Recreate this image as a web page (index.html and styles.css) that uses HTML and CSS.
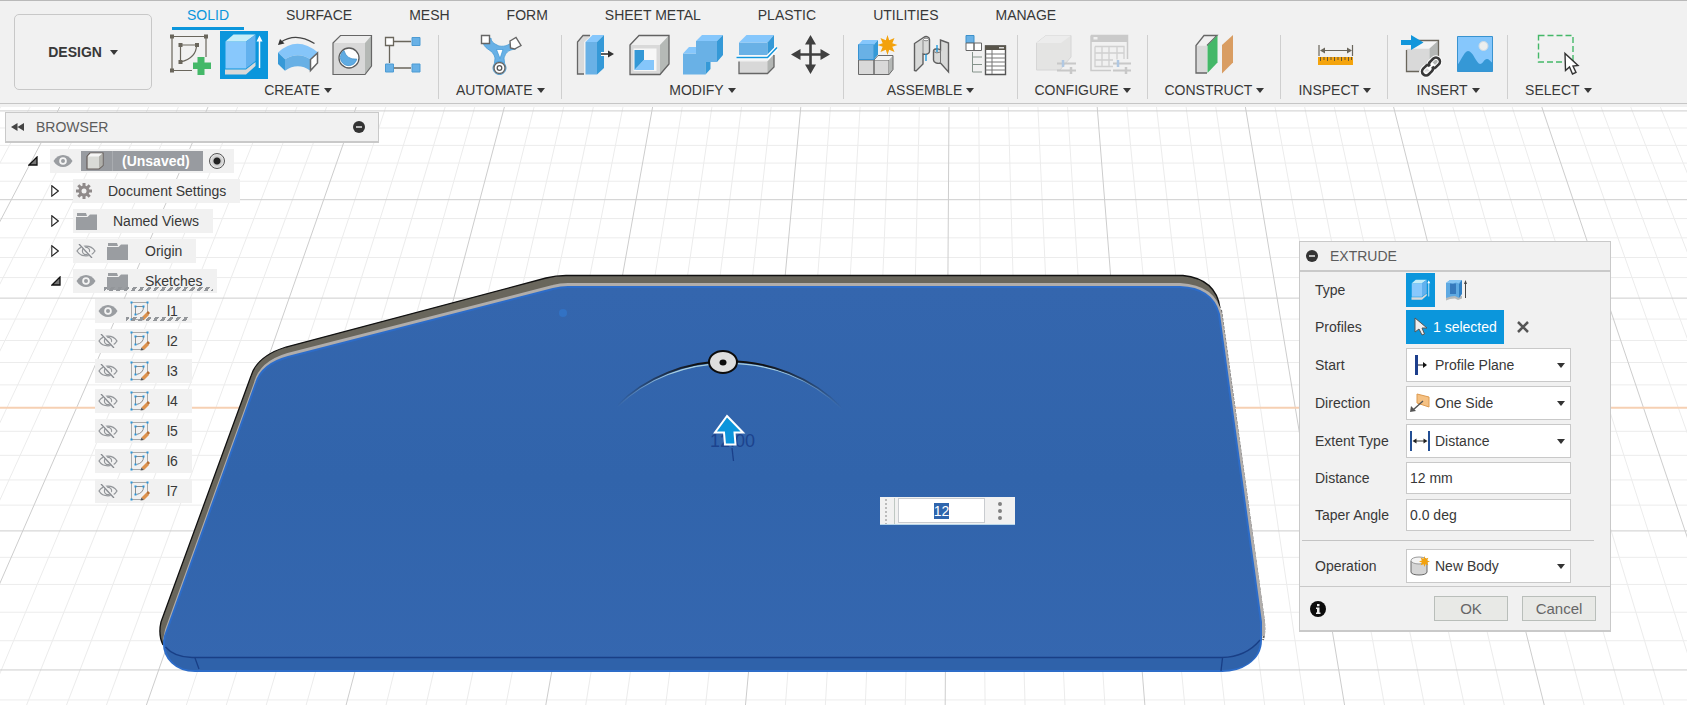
FILE: index.html
```html
<!DOCTYPE html>
<html lang="en">
<head>
<meta charset="utf-8">
<title>Design workspace</title>
<link rel="stylesheet" href="styles.css">
</head>
<body>
<svg class="defs" aria-hidden="true">
  <symbol id="eye" viewBox="0 0 20 14"><path d="M.5 7C5-1 15-1 19.500 7 15 15 5 15 .5 7Z" fill="#9a9da1"/><circle cx="10" cy="7" r="3.800" fill="#f4f4f4"/><circle cx="10" cy="7" r="2" fill="#9a9da1"/></symbol>
  <symbol id="eye-off" viewBox="0 0 20 14"><path d="M1 7C5 .5 15 .5 19 7 15 13.500 5 13.500 1 7Z" fill="none" stroke="#929599" stroke-width="1.300"/><circle cx="10" cy="7" r="3.600" fill="none" stroke="#929599" stroke-width="1.200"/><circle cx="10" cy="7" r="1.300" fill="#929599"/><path d="M4 0 17 14" stroke="#f1f1f1" stroke-width="3"/><path d="M3 0 16 14" stroke="#888b90" stroke-width="1.300"/></symbol>
  <symbol id="folder" viewBox="0 0 21 17"><path d="M1 0h9l1 3H1Z" fill="#9a9da1"/><path d="M0 4h11.500L14 1.500h7V17H0Z" fill="#9a9da1"/></symbol>
  <symbol id="closed" viewBox="0 0 8 12"><path d="M.8.8 7.300 6 .8 11.200Z" fill="#fff" stroke="#222" stroke-width="1.100"/></symbol>
  <symbol id="open" viewBox="0 0 10 10"><path d="M9 1v8H1Z" fill="#777" stroke="#111" stroke-width="1.300"/></symbol>
  <symbol id="sketch" viewBox="0 0 20 20"><path d="M1.500 1.500h16v12M1.500 1.500v17h10" fill="none" stroke="#a9a9a9"/><path d="M5.500 5.500h8M5.500 5.500v8M13.500 6q0 6-7 7.500" fill="none" stroke="#8c8c8c"/><g fill="#2a96db"><path d="M.5.5h2v2h-2zM16.500.5h2v2h-2zM.5 17.500h2v2h-2zM4.500 4.500h2v2h-2zM12.500 4.500h2v2h-2zM4.500 12.500h2v2h-2z"/></g><path d="m11.500 16.500 5-5 2.500 2.500-5 5Z" fill="#dd924d"/><path d="m16.500 11.500 1.500-1.500 2 2-1.500 1.700Z" fill="#b86e30"/><path d="m11.500 16.500-1 3 3.500-.5Z" fill="#555"/></symbol>
  <symbol id="minus" viewBox="0 0 12 12"><circle cx="6" cy="6" r="6" fill="#333"/><path d="M3 6h6" stroke="#ddd" stroke-width="1.600"/></symbol>
  <symbol id="burst" viewBox="0 0 20 20"><path d="m10 0 1.700 5.200L17 3l-2.200 5.300L20 10l-5.200 1.700L17 17l-5.300-2.200L10 20l-1.700-5.200L3 17l2.200-5.300L0 10l5.200-1.700L3 3l5.300 2.200Z" fill="#f3a20d"/></symbol>
  <symbol id="extrude" viewBox="0 0 48 48"><path d="M5 38.500h21l9.500-7.500v4L26 43.500H5Z" fill="#d9d9d9"/><path d="M5.500 10.500h20.500v27H5.500Z" fill="#88c8fc"/><path d="m5.500 10.500 8-7h22l-9.500 7Z" fill="#c4edf8"/><path d="m26 10.500 9.500-7V30L26 37.500Z" fill="#62b1ee"/><path d="M39.500 8v29" stroke="#fff" stroke-width="1.500"/><path d="m36.500 10.500 3-6 3 6Z" fill="#fff"/></symbol>
</svg>

<header class="ribbon">
  <button class="workspace-switch">DESIGN <span class="caret"></span></button>
  <div class="ribbon-main">
    <nav class="tabs">
      <a class="tab active" href="#solid">SOLID</a><a class="tab" href="#surface">SURFACE</a><a class="tab" href="#mesh">MESH</a><a class="tab" href="#form">FORM</a><a class="tab" href="#sheet">SHEET METAL</a><a class="tab" href="#plastic">PLASTIC</a><a class="tab" href="#utilities">UTILITIES</a><a class="tab" href="#manage">MANAGE</a>
    </nav>
    <div class="groups">
      <section class="group">
        <div class="tools">
          <button class="tool" aria-label="Create sketch"><svg viewBox="0 0 48 48"><path d="M6 5.500h34V26M6 5.500v34h20M14.500 14h16.500M14.500 14v17M30.500 14q0 13-16 17" fill="none" stroke="#6a665c" stroke-width="1.200"/><path d="M4 3.500h4v4H4zM38 3.500h4v4h-4zM4 37.500h4v4H4zM12.500 12h4v4h-4zM29 12h4v4h-4zM12.500 29h4v4h-4z" fill="#6a665c"/><path d="M31.500 26h7v5.500H45v6.500h-6.500V44h-7v-6H27v-6.500h4.500Z" fill="#44b868"/></svg></button>
          <button class="tool selected" aria-label="Extrude"><svg><use href="#extrude"/></svg></button>
          <button class="tool" aria-label="Revolve"><svg viewBox="0 0 48 48"><path d="M7 11Q22 1 40.500 12.500" fill="none" stroke="#444" stroke-width="1.400"/><path d="m4 14 2-6 4.500 4.500Z" fill="#333"/><path d="M4 21.500Q23 4 44 21.500L36.300 28.300Q24 20 11 28.300Z" fill="#85c5f9"/><path d="M11 28.300Q24 20 36.300 28.300V39.700Q24 31 11 39.700Z" fill="#68b0e5"/><path d="m4 21.500 7 6.800v11.400L4 33Z" fill="#3799d7"/><path d="m36.500 28.500 7-6.500v10l-7 7.500Z" fill="#fff" stroke="#666" stroke-width="1.500"/></svg></button>
          <button class="tool" aria-label="Hole"><svg viewBox="0 0 48 48"><path d="M5 12h32v31.500H5Z" fill="#d8d8d8"/><path d="m5 12 7.500-7.500h31L37 12Z" fill="#ededed"/><path d="m37 12 6.500-7.500V35L37 43.500Z" fill="#b4b8b5"/><path d="m5 12 7.500-7.500h31V35L37 43.500H5Z" fill="none" stroke="#666" stroke-width="1.200"/><circle cx="21" cy="27" r="10" fill="#fff" stroke="#5b5b5b" stroke-width="1.300"/><path d="M16 19.500a8.300 8.300 0 1 0 12.800 8.500q-10 1-12.800-8.500" fill="#5fabe2" stroke="#3387c4" stroke-width=".6"/></svg></button>
          <button class="tool" aria-label="Pattern"><svg viewBox="0 0 48 48"><path d="M12 10.500h17M7.500 15v17M12 37h17" stroke="#6a665c" stroke-width="1.300"/><path d="M3.500 6.500h8v8h-8z" fill="#fff" stroke="#6a665c" stroke-width="1.300"/><path d="M30 6.500h8v8h-8zM3.500 33h8v8h-8zM30 33h8v8h-8z" fill="#69b1e6" stroke="#4d9bd3"/></svg></button>
        </div>
        <button class="group-label">CREATE<span class="caret"></span></button>
      </section>
      <section class="group">
        <div class="tools">
          <button class="tool" aria-label="Automated modeling"><svg viewBox="0 0 48 48"><path d="M7 12c3 8 10 6 12 15l-1 9h11l-1-9c2-5 3-8 12-9l-4-7c-5 5-12 5-15 3-4-2-6-4-6-7Z" fill="#69b1e6" stroke="#3f97d3" stroke-width=".7"/><path d="M20.500 18.500h6.500l-3 9Z" fill="#fff" stroke="#3994d4" stroke-width=".7"/><circle cx="23.500" cy="37" r="6.500" fill="#fff" stroke="#3f97d3"/><circle cx="23.500" cy="37" r="5.500" fill="#fff" stroke="#666" stroke-width="1.400"/><circle cx="23.500" cy="37" r="2.300" fill="none" stroke="#555" stroke-width="1.300"/><path d="M5.500 4.500h8v8h-8z" fill="#fff" stroke="#666" stroke-width="1.400"/><path d="m34 10 6-3.500 5 8-6.500 3.500-4-1Z" fill="#fff" stroke="#666" stroke-width="1.400"/></svg></button>
        </div>
        <button class="group-label">AUTOMATE<span class="caret"></span></button>
      </section>
      <section class="group">
        <div class="tools">
          <button class="tool" aria-label="Press pull"><svg viewBox="0 0 48 48"><path d="m6.500 11 6-6.500H20L13 11v32H6.500Z" fill="#d9d9d9"/><path d="M13 43H6.500V11L12 4.500h7" fill="none" stroke="#666" stroke-width="1.300"/><path d="M14.500 11H26v32.500H14.500Z" fill="#69b1e6"/><path d="m14.500 11 7-7H33l-7 7Z" fill="#86c7fc"/><path d="m26 11 7-7v33l-7 6.500Z" fill="#3599d7"/><path d="M30 23h8" stroke="#fff" stroke-width="4"/><path d="M30 23h8" stroke="#333" stroke-width="1.600"/><path d="m37 19.500 6 3.500-6 3.500Z" fill="#333"/></svg></button>
          <button class="tool" aria-label="Shell"><svg viewBox="0 0 48 48"><path d="m5 14 9-9.500h30V33l-9 10.500H5Z" fill="#d9d9d9"/><path d="m5 14 9-9.500h30L35 14Z" fill="#f0f0f0"/><path d="m35 14 9-9.500V33l-9 10.500Z" fill="#b5b9b6"/><path d="m5 14 9-9.500h30V33l-9 10.500H5Z" fill="none" stroke="#626262" stroke-width="1.300"/><path d="M8.500 17.500h23V40h-23Z" fill="#f7f7f7"/><path d="M9.500 19H19v10L9.500 39Z" fill="#3498d6"/><path d="m9.500 39 9.500-10h10v10Z" fill="#85c6fb"/></svg></button>
          <button class="tool" aria-label="Combine"><svg viewBox="0 0 48 48"><path d="M17 10h21v21H26.500v12.500H4V22.500h13Z" fill="#69b1e6"/><path d="m17 10 6-6h21l-6 6ZM4 22.500l6-6.500h7v6.500Z" fill="#86c7fc"/><path d="m38 10 6-6v20l-6 7ZM26.500 31h5v7l-5 5.500Z" fill="#3599d7"/></svg></button>
          <button class="tool" aria-label="Split body"><svg viewBox="0 0 48 48"><path d="M6 11.500h28.500V24H6Z" fill="#69b1e6"/><path d="m6 11.500 7.500-7.500H41l-6.500 7.500Z" fill="#86c7fc"/><path d="M34.500 11.500 41 4v13.500L34.500 24Z" fill="#3599d7"/><path d="M6 30.500h28.500l6.500-7V36l-6.500 6.500H6Z" fill="#d8d8d8"/><path d="m34.500 30.500 6.500-7V36l-6.500 6.500Z" fill="#b3b6b4"/><path d="M6 30.500v12h28.500L41 36V24" fill="none" stroke="#666" stroke-width="1.300"/><path d="M3.500 26.500h31L44 16.500" fill="none" stroke="#fff" stroke-width="4"/><path d="M3.500 26.500h31L44 16.500" fill="none" stroke="#1496dc" stroke-width="1.600"/></svg></button>
          <button class="tool" aria-label="Move"><svg viewBox="0 0 48 48"><path d="M23.500 9v29M9 23.500h29" stroke="#404040" stroke-width="2.600"/><path d="m18 13.500 5.500-9.500 5.500 9.500ZM18 33.500l5.500 9.500 5.500-9.500ZM13.500 18 4 23.500l9.500 5.500ZM33.500 18l9.500 5.500-9.500 5.500Z" fill="#404040"/></svg></button>
        </div>
        <button class="group-label">MODIFY<span class="caret"></span></button>
      </section>
      <section class="group">
        <div class="tools">
          <button class="tool" aria-label="New component"><svg viewBox="0 0 48 48"><path d="M5.500 29H21v14.500H5.500ZM21 29h15v14.500H21Z" fill="#d9d9d9" stroke="#6a6a6a"/><path d="m21 29 4-4.500h15L36 29Z" fill="#f3f3f3"/><path d="m36 29 4-4.500v14l-4 5Z" fill="#b5b8b6"/><path d="m21 29 4-4.500h15v14l-4 5" fill="none" stroke="#6a6a6a"/><path d="M5.500 13.500H21v15H5.500Z" fill="#69b1e6" stroke="#3592d2"/><path d="m5.500 13.500 4-4.500H25l-4 4.500Z" fill="#86c7fc"/><path d="m21 13.500 4-4.500v14.500L21 28.500Z" fill="#3599d7"/><use href="#burst" x="24.500" y="4" width="20" height="20"/></svg></button>
          <button class="tool" aria-label="Joint"><svg viewBox="0 0 48 48"><path d="m7.500 12.500 9-6c3-2 6-.5 6 2v12c0 2-3 3.500-6.500 2.500V33l-7 7-1.500-.5Z" fill="#d8d9d8" stroke="#5f5f5f" stroke-width="1.400"/><path d="M16 9v14" stroke="#888"/><ellipse cx="19" cy="8.500" rx="2.500" ry="1.300" fill="#fff" stroke="#888"/><path d="m41.500 12-8-3v10c-3-2-7-1-7 1v9c0 2.500 4 4 7 3l8 9Z" fill="#d8d9d8" stroke="#5f5f5f" stroke-width="1.400"/><path d="M33.500 19v13M26.500 20.500q3 2.500 7 .5" fill="none" stroke="#777"/><path d="M19 23v7M30 14v7" stroke="#1496dc" stroke-width="1.300"/></svg></button>
          <button class="tool" aria-label="Bill of materials"><svg viewBox="0 0 48 48"><path d="M5 4.500h8V12H5z" fill="#69b1e6" stroke="#3d91ca"/><path d="M5 12h8v7.500H5zM13 12h7.500v7.500H13z" fill="#fff" stroke="#666"/><path d="M11.500 21v20H21M11.500 26H21M11.500 33.500H21" fill="none" stroke="#85938b"/><path d="M24.500 15h20v28.500h-20z" fill="#fff" stroke="#555" stroke-width="1.400"/><path d="M24 14.500h21V19H24z" fill="#59554b"/><path d="M24.500 23h20M24.500 27h20M24.500 31h20M24.500 35h20M24.500 39h20M31 19v24" stroke="#777"/><path d="M38 16h5v1.500h-5z" fill="#ddd"/></svg></button>
        </div>
        <button class="group-label">ASSEMBLE<span class="caret"></span></button>
      </section>
      <section class="group">
        <div class="tools">
          <button class="tool" aria-label="Configure design" disabled><svg viewBox="0 0 48 48"><path d="m4.500 12 9.500-7.500h25V26L28 39H4.500Z" fill="#e4e4e3" stroke="#d6d6d6"/><path d="m4.500 12 9.500-7.500h25L29 12Z" fill="#ececec"/><path d="M25 32.500h19M25 39.500h19" stroke="#c8c8c8" stroke-width="2"/><path d="M31 29v7" stroke="#b0c8e3" stroke-width="2.500"/><path d="M39 36v7" stroke="#c8c8c8" stroke-width="2.500"/></svg></button>
          <button class="tool" aria-label="Configuration table" disabled><svg viewBox="0 0 48 48"><path d="M5 4.500h36.500V28M5 4.500v35h20" fill="none" stroke="#cacaca" stroke-width="1.500"/><path d="M5 4h37v7H5z" fill="#cacaca"/><path d="M7.500 6h4v2.500h-4z" fill="#f0f0f0"/><path d="M9 15.500h29V28M9 15.500v20h18M9 22h29M9 29h18M16 15.500v20M23 15.500v20M31 15.500v13" fill="none" stroke="#d0d0d0" stroke-width="1.300"/><path d="M27 32.500h18M27 39.500h18" stroke="#c8c8c8" stroke-width="2"/><path d="M32 29v7" stroke="#b0c8e3" stroke-width="2.500"/><path d="M40 36v7" stroke="#c8c8c8" stroke-width="2.500"/></svg></button>
        </div>
        <button class="group-label">CONFIGURE<span class="caret"></span></button>
      </section>
      <section class="group">
        <div class="tools">
          <button class="tool" aria-label="Offset plane"><svg viewBox="0 0 48 48"><path d="M6 14.500h11V42H6Z" fill="#d9d9d9"/><path d="m6 14.500 8-10h13l-10 10Z" fill="#f0f0f0"/><path d="M17 42H6V14.500l8-10h13l-10 10" fill="none" stroke="#666" stroke-width="1.300"/><path d="m17.500 14.500 10-10v27l-10 10.500Z" fill="#44b868"/><path d="m32 14 11-10v27.500L32 42.500Z" fill="#d99d62"/></svg></button>
        </div>
        <button class="group-label">CONSTRUCT<span class="caret"></span></button>
      </section>
      <section class="group">
        <div class="tools">
          <button class="tool" aria-label="Measure"><svg viewBox="0 0 48 48"><path d="M7 26h35v8H7Z" fill="#f4a40d"/><path d="M9.500 26v4M13 26v3M16.500 26v4M20 26v3M23.500 26v4M27 26v3M30.500 26v4M34 26v3M37.500 26v4M40.500 26v3" stroke="#685734"/><path d="M8 14v11M41.500 14v11M10 19.500h30" stroke="#6a665c" stroke-width="1.200"/><path d="m9 19.500 5-3v6ZM41 19.500l-5-3v6Z" fill="#6a665c"/></svg></button>
        </div>
        <button class="group-label">INSPECT<span class="caret"></span></button>
      </section>
      <section class="group">
        <div class="tools">
          <button class="tool" aria-label="Insert component"><svg viewBox="0 0 48 48"><path d="M9.500 17.500h23v23h-23Z" fill="#d9d9d9"/><path d="m9.500 17.500 8-8h24l-9 8Z" fill="#f5f5f5"/><path d="m32.500 17.500 9-8V31l-9 9.500Z" fill="#b4b7b5"/><path d="M9.500 19v21.500H22M20 9.500h21.500V27" fill="none" stroke="#6a665c" stroke-width="1.300"/><path d="M4 9h10V4l12.500 7.500L14 19v-5H4Z" fill="#1296db"/><g transform="rotate(-45 34 35.500)" fill="none"><path d="M31 31.500h-4a4 4 0 0 0 0 8h4a4 4 0 0 0 3.500-2M37 39.500h4a4 4 0 0 0 0-8h-4a4 4 0 0 0-3.500 2M30 35.500h8" stroke="#fff" stroke-width="4.500"/><path d="M34.500 33.500a4 4 0 0 0-3.500-2h-4a4 4 0 0 0 0 8h4a4 4 0 0 0 4-3M33.500 37.500a4 4 0 0 0 3.500 2h4a4 4 0 0 0 0-8h-4a4 4 0 0 0-4 3" stroke="#383838" stroke-width="2.600"/></g></svg></button>
          <button class="tool" aria-label="Canvas"><svg viewBox="0 0 48 48"><path d="M6.500 5.500h35v35h-35Z" fill="#86c7fc" stroke="#3993d0"/><path d="M6.500 34C12 26 13 21 17 20c5 0 8 12 12 13 3 0 4-5 7-5 2 0 3 2 5.500 4v8.500h-35Z" fill="#3598d6"/><circle cx="32.500" cy="15" r="4.500" fill="#eceeee" stroke="#cfdbe4"/></svg></button>
        </div>
        <button class="group-label">INSERT<span class="caret"></span></button>
      </section>
      <section class="group">
        <div class="tools">
          <button class="tool" aria-label="Select"><svg viewBox="0 0 48 48"><path d="M4.500 4.500H39V31H4.500Z" fill="none" stroke="#44b868" stroke-width="1.400" stroke-dasharray="6 3"/><path d="m31 22.500.5 17 4-3.500 3 7 3.500-1.500-3-6.500 5-.5Z" fill="#fff" stroke="#333" stroke-width="1.400"/></svg></button>
        </div>
        <button class="group-label">SELECT<span class="caret"></span></button>
      </section>
    </div>
  </div>
</header>

<main class="workspace">
  <svg class="scene" viewBox="0 107 1687 598" preserveAspectRatio="xMidYMin slice" role="img" aria-label="Model view">
    <defs>
      <linearGradient id="fade" x1="617" x2="842" y1="0" y2="0" gradientUnits="userSpaceOnUse"><stop offset="0" stop-color="#111" stop-opacity="0"/><stop offset=".35" stop-color="#111"/><stop offset=".65" stop-color="#111"/><stop offset="1" stop-color="#111" stop-opacity="0"/></linearGradient>
      <linearGradient id="fade-light" x1="617" x2="842" y1="0" y2="0" gradientUnits="userSpaceOnUse"><stop offset="0" stop-color="#9fc6dc" stop-opacity="0"/><stop offset=".25" stop-color="#a9d0e0"/><stop offset=".7" stop-color="#a9d0e0"/><stop offset="1" stop-color="#9fc6dc" stop-opacity="0"/></linearGradient>
      <linearGradient id="face" x1="0" x2="0" y1="0" y2="1"><stop offset="0" stop-color="#3466ae"/><stop offset=".5" stop-color="#3164ab"/><stop offset="1" stop-color="#3567b0"/></linearGradient>
    </defs>
    <g id="grid"></g>
    <path d="M163 645Q158 635 161 622L251 376Q257 356 286 347L546 278Q556 275.500 566 275.500H1183Q1216 279 1220 308L1224 340 1200 320 700 300 300 400Z" fill="#69665c"/>
    <path d="M163 645Q158 635 161 622L251 376Q257 356 286 347L546 278Q556 275.500 566 275.500H1183Q1216 279 1220 308" fill="none" stroke="#111" stroke-width="1.300"/>
    <path d="M1221 310 1264 622Q1265 632 1263 640" fill="none" stroke="#666" stroke-width="2" stroke-dasharray="3 1"/>
    <path d="M165 640 167 630 256 383Q261 363 288 355L553 287Q560 285 568 285H1180Q1214 287 1220 314L1263 622V636" fill="none" stroke="#b0adab" stroke-width="4"/>
    <path d="M164 642 165 636 256 383Q262 364 288 357L553 289Q561 287 568 287H1180Q1212 288 1219 314L1261 622V640C1261 661 1240 671 1222 671H195C176 671 163 658 164 642Z" fill="url(#face)" stroke="#2d6cc8" stroke-width="2"/>
    <path d="M165.500 645Q174 657 192 657.500H1222Q1246 657 1260 640 1259 669 1222 670H195Q169 670 165.500 645Z" fill="#2f62aa"/>
    <path d="M165.500 647Q174 657 192 657.500H1222Q1246 657 1260 640M195 658 199 669M1222.500 658 1221 671" fill="none" stroke="#193f86" stroke-width="1.300"/>
    <circle cx="563" cy="313" r="4" fill="#3272c4"/>
    <path d="M617 407C675 350 780 347 842 409" fill="none" stroke="url(#fade-light)" stroke-width="1.200"/>
    <path d="M617 406C675 347 780 345 842 408" fill="none" stroke="url(#fade)" stroke-width="1.800"/>
    <ellipse cx="723" cy="362" rx="14" ry="11" fill="#dedede" stroke="#0c0c0c" stroke-width="2"/><ellipse cx="723" cy="362.500" rx="3.500" ry="3" fill="#0c0c0c"/>
    <text class="scene-dim" x="710" y="447">12.00</text>
    <path d="m732 448 1.500 13" stroke="#1b408a" stroke-width="1.300"/>
    <path d="m727 416 16 16.500h-8.500l1 12h-10.500l-1-12h-9Z" fill="#0b95dc" stroke="#fff" stroke-width="2"/>
  </svg>

  <aside class="browser">
    <div class="browser-head">
      <svg class="rewind" viewBox="0 0 13 8"><path d="M6.500 0v8L0 4ZM13 0v8L6.500 4Z" fill="#444"/></svg>
      <h2 class="panel-title">BROWSER</h2>
      <button class="dot-button" aria-label="Collapse browser"><svg><use href="#minus"/></svg></button>
    </div>
    <ul class="tree">
      <li class="row root"><svg class="toggle open"><use href="#open"/></svg><div class="chip"><svg class="eye"><use href="#eye"/></svg><div class="root-name"><svg class="cube" viewBox="0 0 18 18"><path d="m1 4.500 3-3.500h13v12.500L13 17H1Z" fill="#d9dad6" stroke="#665e5a" stroke-width="1.200"/><path d="m1.500 4.500 3-3h12L13 4.500Z" fill="#f6f6f6"/><path d="m13 4.500 3.500-3v12L13 16.500Z" fill="#b0b0ab"/></svg><span class="root-text">(Unsaved)</span></div><input class="activate" type="radio" checked aria-label="Activate (Unsaved)"></div></li>
      <li class="row level1"><svg class="toggle"><use href="#closed"/></svg><div class="chip"><svg class="gear" viewBox="0 0 16 16"><path d="M8 0v16M0 8h16M2.300 2.300l11.400 11.400M13.700 2.300 2.300 13.700" stroke="#8f8a8a" stroke-width="3"/><circle cx="8" cy="8" r="5.500" fill="#8f8a8a"/><circle cx="8" cy="8" r="2.500" fill="#f1f1f1"/></svg><span class="doc">Document Settings</span></div></li>
      <li class="row level1"><svg class="toggle"><use href="#closed"/></svg><div class="chip"><svg class="folder"><use href="#folder"/></svg><span>Named Views</span></div></li>
      <li class="row level1"><svg class="toggle"><use href="#closed"/></svg><div class="chip"><svg class="eye"><use href="#eye-off"/></svg><svg class="folder"><use href="#folder"/></svg><span>Origin</span></div></li>
      <li class="row level1"><svg class="toggle open"><use href="#open"/></svg><div class="chip hatched"><svg class="eye"><use href="#eye"/></svg><svg class="folder"><use href="#folder"/></svg><span>Sketches</span></div></li>
      <li class="row level2"><div class="chip hatched"><svg class="eye"><use href="#eye"/></svg><svg class="sketch"><use href="#sketch"/></svg><span>l1</span></div></li>
      <li class="row level2"><div class="chip"><svg class="eye"><use href="#eye-off"/></svg><svg class="sketch"><use href="#sketch"/></svg><span>l2</span></div></li>
      <li class="row level2"><div class="chip"><svg class="eye"><use href="#eye-off"/></svg><svg class="sketch"><use href="#sketch"/></svg><span>l3</span></div></li>
      <li class="row level2"><div class="chip"><svg class="eye"><use href="#eye-off"/></svg><svg class="sketch"><use href="#sketch"/></svg><span>l4</span></div></li>
      <li class="row level2"><div class="chip"><svg class="eye"><use href="#eye-off"/></svg><svg class="sketch"><use href="#sketch"/></svg><span>l5</span></div></li>
      <li class="row level2"><div class="chip"><svg class="eye"><use href="#eye-off"/></svg><svg class="sketch"><use href="#sketch"/></svg><span>l6</span></div></li>
      <li class="row level2"><div class="chip"><svg class="eye"><use href="#eye-off"/></svg><svg class="sketch"><use href="#sketch"/></svg><span>l7</span></div></li>
    </ul>
  </aside>

  <div class="value-box">
    <span class="grip"></span>
    <input class="value-input" type="text" value="12" aria-label="Extrude distance">
    <button class="more" aria-label="More options"><svg viewBox="0 0 4 18"><path d="M0 2a2 2 0 1 0 4 0 2 2 0 1 0-4 0M0 9a2 2 0 1 0 4 0 2 2 0 1 0-4 0M0 16a2 2 0 1 0 4 0 2 2 0 1 0-4 0" fill="#808080"/></svg></button>
  </div>

  <form class="dialog">
    <div class="dialog-head">
      <button type="button" class="dot-button" aria-label="Collapse dialog"><svg><use href="#minus"/></svg></button>
      <h2 class="panel-title">EXTRUDE</h2>
    </div>
    <div class="fields">
      <div class="field"><span class="field-label">Type</span><div class="types"><button type="button" class="type selected" aria-label="Extrude"><svg><use href="#extrude"/></svg></button><button type="button" class="type" aria-label="Thin extrude"><svg viewBox="0 0 24 24"><path d="M2 19.500 6 17l3 1 5-1 4 1v2.500L14 22l-3-1.500-5 .500-4 1.500Z" fill="#b4b9bb"/><path d="m2 5 4-3h12l-3 3.500V20l-4-2-4 .5L2 20Z" fill="#5ea9e2"/><path d="M6 5.500h6V16H6Z" fill="#3579bd"/><path d="m2 5 4-3h12l-3 3.500-3-1-3 1-3-.5Z" fill="#86c5f4"/><path d="m15 5.500 3-3.500v14l-3 4Z" fill="#2f7fc4"/><path d="M21.500 5v15" stroke="#444"/><path d="m20 6 1.500-4L23 6Z" fill="#444"/></svg></button></div></div>
      <div class="field"><span class="field-label">Profiles</span><button type="button" class="pick"><svg viewBox="0 0 14 20"><path d="m1 1 0 14 4-3 3 6 2.500-1-2.500-6h5Z" fill="#eee" stroke="#555"/></svg>1 selected</button><button type="button" class="clear" aria-label="Clear selection"><svg viewBox="0 0 12 12"><path d="m1 1 10 10M11 1 1 11" stroke="#555" stroke-width="2.500"/></svg></button></div>
      <div class="field tall"><label class="field-label" for="start">Start</label><div class="picker"><select id="start"><option>Profile Plane</option></select><svg class="picker-icon" viewBox="0 0 20 20"><path d="M5 0h3v20H5z" fill="#1d3f8c"/><path d="M8 10h7" stroke="#222"/><path d="m13 7 4 3-4 3Z" fill="#111"/></svg></div></div>
      <div class="field tall"><label class="field-label" for="direction">Direction</label><div class="picker"><select id="direction"><option>One Side</option></select><svg class="picker-icon" viewBox="0 0 20 20"><path d="m7 1 12 3v10L7 10Z" fill="#f5c183" stroke="#dd9b50"/><path d="M13 8 3 17" stroke="#555" stroke-width="1.400"/><path d="m0 19 1-6 5 5Z" fill="#555"/></svg></div></div>
      <div class="field tall"><label class="field-label" for="extent">Extent Type</label><div class="picker"><select id="extent"><option>Distance</option></select><svg class="picker-icon" viewBox="0 0 20 20"><path d="M1 0v20M19 0v20" stroke="#234f95" stroke-width="2"/><path d="M4 10h12" stroke="#333"/><path d="m2.500 10 4-2.500v5ZM17.500 10l-4-2.500v5Z" fill="#222"/></svg></div></div>
      <div class="field"><label class="field-label" for="distance">Distance</label><input class="text-input" id="distance" type="text" value="12 mm"></div>
      <div class="field"><label class="field-label" for="taper">Taper Angle</label><input class="text-input" id="taper" type="text" value="0.0 deg"></div>
      <hr class="rule">
      <div class="field"><label class="field-label" for="operation">Operation</label><div class="picker"><select id="operation"><option>New Body</option></select><svg class="picker-icon" viewBox="0 0 20 20"><path d="M1 5v11c0 4 16 4 16 0V5Z" fill="#d4d4d4" stroke="#666"/><ellipse cx="9" cy="4.500" rx="8" ry="3.500" fill="#f4f4f4" stroke="#999"/><use href="#burst" x="9" y="0" width="11" height="11"/></svg></div></div>
    </div>
    <div class="dialog-foot">
      <button type="button" class="info" aria-label="Information"><svg viewBox="0 0 16 16"><circle cx="8" cy="8" r="8" fill="#0c0c0c"/><path d="M7 3h2.500v2.300H7zM6 6.500h3.500v5h1V13H6v-1.500h1V8H6z" fill="#eee"/></svg></button>
      <button type="button" class="action">OK</button><button type="button" class="action">Cancel</button>
    </div>
  </form>
</main>
<script src="scene.js"></script>
</body>
</html>
```
FILE: styles.css
```css
* { box-sizing: border-box; }
body {
  margin: 0;
  height: 100vh;
  display: flex;
  flex-direction: column;
  overflow: hidden;
  background: #fff;
  color: #383838;
  font: 14px/20px "Liberation Sans", Arial, sans-serif;
}
button, input, select { font: inherit; color: inherit; }
button { border: 0; padding: 0; background: none; }
svg { display: block; }
.defs { position: absolute; width: 0; height: 0; }

/* Ribbon */
.ribbon {
  flex: none;
  display: flex;
  align-items: flex-start;
  padding-bottom: 3px;
  background: linear-gradient(#c6c6c6, #c6c6c6) no-repeat 0 calc(100% - 3px) / 100% 1px, #f1f1f1;
  border-top: 1px solid #b9b9b9;
  white-space: nowrap;
}
.workspace-switch {
  flex: none;
  width: 138px;
  height: 76px;
  margin: 13px 5px 0 14px;
  border: 1px solid #c8c8c8;
  border-radius: 5px;
  font-weight: bold;
}
.caret {
  display: inline-block;
  margin-left: 4px;
  vertical-align: 2px;
  border: solid transparent;
  border-width: 5px 4px 0;
  border-top-color: #383838;
}
.ribbon-main { flex: 1; }
.tabs { display: flex; gap: 27px; padding-left: 15px; }
.tab {
  padding: 4px 15px 2px;
  border-bottom: 3px solid transparent;
  color: #383838;
  text-decoration: none;
}
.tab.active { color: #0b96dc; border-color: #0b96dc; }
.groups { display: flex; }
.group {
  display: flex;
  flex-direction: column;
  align-items: center;
  padding: 1px 9px 4px;
}
.group:not(:last-child) {
  background: linear-gradient(#cfcfcf, #cfcfcf) no-repeat right 5px / 1px 64px;
}
.tools { display: flex; gap: 6px; }
.tool { width: 48px; height: 48px; }
.tool svg { width: 48px; height: 48px; }
.tool.selected { background: #0b96dc; }
.group-label { height: 20px; margin-top: 1px; padding: 0 8px; }

/* Canvas */
.workspace { flex: 1; position: relative; min-height: 0; }
.scene { position: absolute; inset: 0; width: 100%; height: 100%; }
.minor { stroke: #ececec; stroke-width: 1; }
.major { stroke: #cdcdcd; stroke-width: 1; }
.axis { stroke: #f6d0b3; stroke-width: 2; }
.scene-dim { font: 18px "Liberation Sans", Arial, sans-serif; fill: #1c438e; }

/* Browser tree */
.browser { position: absolute; left: 5px; top: 5px; width: 374px; }
.browser-head {
  display: flex;
  align-items: center;
  height: 31px;
  padding: 0 13px 0 5px;
  background: #f1f1f1;
  border: 1px solid #c9c9c9;
  border-bottom-width: 2px;
}
.panel-title { margin: 0; font-size: 14px; font-weight: normal; color: #5c5c5c; }
.browser-head .panel-title { flex: 1; margin-left: 12px; }
.rewind { width: 13px; height: 8px; }
.dot-button, .dot-button svg { width: 12px; height: 12px; }
.tree {
  list-style: none;
  display: flex;
  flex-direction: column;
  gap: 6px;
  margin: 6px 0 0;
  padding: 0;
}
.row { display: flex; align-items: center; height: 24px; }
.root { padding-left: 23px; }
.level1 { padding-left: 46px; }
.level2 { padding-left: 90px; }
.toggle { width: 8px; height: 12px; margin-right: 14px; }
.toggle.open { width: 10px; height: 10px; margin-right: 12px; }
.chip {
  display: flex;
  align-items: center;
  height: 24px;
  padding: 0 14px 0 3px;
  background: #f1f1f1;
}
.chip .eye { width: 20px; height: 14px; }
.folder { width: 21px; height: 17px; margin-right: 16px; }
.gear { width: 16px; height: 16px; margin-right: 16px; }
.sketch { width: 20px; height: 20px; margin: 0 17px 0 12px; }
.eye + .folder { margin: 0 17px 0 11px; }
.hatched { position: relative; }
.hatched::after {
  content: "";
  position: absolute;
  left: 31px;
  right: 4px;
  bottom: 2px;
  height: 4px;
  background: repeating-linear-gradient(125deg, #93969a 0 3px, transparent 3px 6px);
}
.root .chip { padding: 0 9px 0 3px; }
.root-name {
  display: flex;
  align-items: center;
  height: 20px;
  margin: 0 6px 0 8px;
  padding-left: 5px;
  background: #989ba0;
  color: #fff;
  font-weight: bold;
}
.cube { width: 18px; height: 18px; }
.root-text { margin-left: 8px; padding: 0 13px 0 9px; border-left: 1px solid #a9acb0; }
.activate {
  appearance: none;
  width: 16px;
  height: 16px;
  margin: 0;
  border: 1px solid #555;
  border-radius: 50%;
  background: radial-gradient(#222 0 3px, #c9c9c9 4px, #e9e9e9 7px);
}

/* In-canvas value entry */
.value-box {
  position: absolute;
  left: 880px;
  top: 390px;
  display: flex;
  align-items: center;
  width: 135px;
  height: 28px;
  background: #f1f1f1;
  border-bottom: 1px solid #b8d6ea;
}
.grip {
  width: 15px;
  height: 26px;
  margin-right: 3px;
  border-right: 1px solid #bfc8c3;
  background: radial-gradient(circle, #bbb 1px, transparent 1px) 4px 0 / 4px 4px;
  box-shadow: inset 4px 0 #f1f1f1, inset -7px 0 #f1f1f1;
}
.value-input {
  width: 87px;
  height: 25px;
  padding: 0;
  border: 1px solid #c9ccd0;
  background: #fff;
  text-align: center;
  outline: none;
}
.value-input::selection { background: #2f65ad; color: #fff; }
.more { flex: 1; display: flex; justify-content: center; }
.more svg { width: 4px; height: 18px; }

/* Extrude dialog */
.dialog {
  position: absolute;
  top: 134px;
  right: 76px;
  width: 312px;
  background: #f1f1f1;
  border: 1px solid #c9c9c9;
  border-bottom-width: 2px;
}
.dialog-head {
  display: flex;
  align-items: center;
  gap: 12px;
  height: 30px;
  padding-left: 6px;
  border-bottom: 2px solid #c9c9c9;
}
.fields { display: flex; flex-direction: column; gap: 3px; padding: 1px 39px 3px 15px; }
.field { display: grid; grid-template-columns: 91px auto 1fr; align-items: center; height: 34px; }
.field.tall { height: 35px; }
.types { display: flex; gap: 6px; }
.type { display: grid; place-items: center; width: 29px; height: 34px; }
.type svg { width: 24px; height: 24px; }
.type.selected, .pick { background: #0b96dc; color: #fff; }
.pick { display: flex; align-items: center; gap: 5px; height: 34px; padding: 0 7px 0 8px; }
.pick svg { width: 14px; height: 20px; }
.clear { margin-left: 13px; justify-self: start; }
.clear svg { width: 12px; height: 12px; }
.picker { position: relative; grid-column: 2 / -1; }
.picker::after {
  content: "";
  position: absolute;
  right: 6px;
  top: 15px;
  border: solid transparent;
  border-width: 5px 4px 0;
  border-top-color: #333;
}
.picker-icon { position: absolute; left: 4px; top: 7px; width: 20px; height: 20px; }
.picker select {
  appearance: none;
  display: block;
  width: 100%;
  height: 34px;
  padding: 0 20px 0 28px;
  border: 1px solid #c9c9c9;
  border-radius: 0;
  background: #fff;
}
.text-input {
  grid-column: 2 / -1;
  width: 100%;
  height: 32px;
  padding: 0 3px;
  border: 1px solid #c9c9c9;
  background: #fff;
}
.rule { width: 292px; height: 1px; margin: 5px 0 5px -13px; border: 0; background: #c4c4c4; }
.dialog-foot {
  display: flex;
  align-items: center;
  gap: 14px;
  height: 44px;
  padding: 0 14px 0 10px;
  border-top: 1px solid #c9c9c9;
}
.info { margin-right: auto; }
.info svg { width: 16px; height: 16px; }
.action {
  width: 74px;
  height: 25px;
  border: 1px solid #b9beba;
  background: #e8e9e6;
  color: #666;
  font-size: 15px;
}
```
FILE: scene.js
```js
// Ground grid in one-point perspective: every fifth line is a major one.
const grid = document.getElementById("grid");
const horizon = -1614;
const vanishX = 960;
const yNear = 705;
const yFar = 107;

function addLine(x1, y1, x2, y2, cls) {
  const el = document.createElementNS("http://www.w3.org/2000/svg", "line");
  el.setAttribute("x1", x1);
  el.setAttribute("y1", y1);
  el.setAttribute("x2", x2);
  el.setAttribute("y2", y2);
  el.setAttribute("class", cls);
  grid.appendChild(el);
}

function drawGrid(major) {
  const spread = (yNear - horizon) / (yFar - horizon);
  for (let i = -40; i <= 35; i++) {
    if ((i % 5 === 0) !== major) continue;
    const x = 949 + 29.64 * i;
    addLine(x, yFar, vanishX + (x - vanishX) * spread, yNear, major ? "major" : "minor");
  }
  for (let j = -16; j <= 16; j++) {
    if ((j % 5 === 0) !== major) continue;
    const y = 1 / (4.946e-4 - 0.05676e-4 * j) + horizon;
    addLine(0, y, 1687, y, j === 0 ? "axis" : major ? "major" : "minor");
  }
}

drawGrid(false);
drawGrid(true);

const valueInput = document.querySelector(".value-input");
valueInput.focus();
valueInput.select();
```
